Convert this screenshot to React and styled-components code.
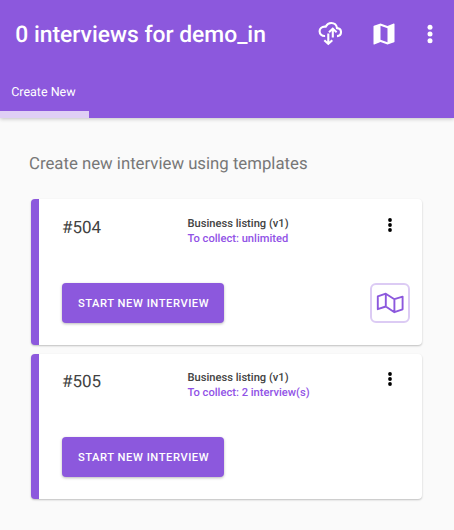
import React from "react";
import styled, { createGlobalStyle } from "styled-components";

const PURPLE = "#8c58dd";

const GlobalStyle = createGlobalStyle`
  *, *::before, *::after { box-sizing: border-box; }
  body {
    margin: 0;
    background: #fafafa;
    font-family: Roboto, sans-serif;
    text-rendering: geometricPrecision;
    -webkit-font-smoothing: antialiased;
  }
`;

const Screen = styled.div`
  display: flex;
  flex-direction: column;
  width: 454px;
  height: 530px;
  overflow: hidden;
  background: #fafafa;
`;

const Header = styled.header`
  display: flex;
  flex-direction: column;
  height: 118px;
  flex: none;
  background: ${PURPLE};
  color: #fff;
  box-shadow: 0 1px 4px rgba(0, 0, 0, 0.22);
`;

const Toolbar = styled.div`
  display: flex;
  align-items: center;
  height: 67px;
  padding-left: 15.3px;
`;

const Title = styled.h1`
  margin: 3px 0 0;
  flex: 1;
  font-size: 22.85px;
  line-height: 26px;
  font-weight: 500;
  white-space: nowrap;
`;

const Actions = styled.div`
  display: flex;
  align-items: center;
  padding-right: 11px;
`;

const IconButton = styled.button`
  display: flex;
  padding: 0;
  border: 0;
  background: none;
  color: inherit;
  margin-left: ${(p) => p.$gap || 0}px;
`;

const Tabs = styled.nav`
  display: flex;
  height: 51px;
`;

const Tab = styled.div`
  width: 88.5px;
  height: 51px;
  padding: 17px 0 0 11.2px;
  border-bottom: 7px solid #dfcff5;
  font-size: 12.5px;
  line-height: 17px;
  white-space: nowrap;
`;

const Content = styled.main`
  padding: 35px 32.5px 0 31px;
`;

const Heading = styled.h2`
  margin: 0 0 24px -2px;
  font-size: 16.75px;
  line-height: 22px;
  font-weight: 400;
  color: #777;
`;

const Card = styled.article`
  display: flex;
  flex-direction: column;
  justify-content: space-between;
  height: ${(p) => (p.$first ? 146 : 145)}px;
  margin-bottom: 9px;
  padding: ${(p) => (p.$first ? 17 : 16)}px 11.5px 22px 23px;
  border-left: 8px solid ${PURPLE};
  border-radius: 4px;
  background: #fff;
  box-shadow: 0 1px 2px rgba(0, 0, 0, 0.24);
`;

const CardTop = styled.div`
  display: grid;
  grid-template-columns: 125.5px 1fr 18px;
  padding-right: 11px;
`;

const Number = styled.div`
  font-size: 17px;
  line-height: 24px;
  color: #424242;
`;

const Details = styled.div`
  font-size: 11.15px;
  line-height: 15px;
  font-weight: 500;
  color: #424242;
`;

const Quota = styled.div`
  color: #9153e6;
`;

const CardActions = styled.div`
  display: flex;
  justify-content: space-between;
  align-items: center;
  height: 40px;
`;

const StartButton = styled.button`
  width: 162px;
  height: 40px;
  padding: 2px 0 0 1px;
  border: 0;
  border-radius: 4px;
  background: ${PURPLE};
  color: #fff;
  font: 500 11.2px/16px Roboto, sans-serif;
  letter-spacing: 0.54px;
  white-space: nowrap;
  box-shadow: 0 1px 3px rgba(0, 0, 0, 0.28);
`;

const MapButton = styled.button`
  display: flex;
  align-items: center;
  justify-content: center;
  width: 40px;
  height: 40px;
  padding: 0;
  border: 2px solid #dccbf4;
  border-radius: 6px;
  background: #fff;
  color: ${PURPLE};
`;

const SyncIcon = () => (
  <svg width="24" height="26" viewBox="0 0 24 26" fill="none" stroke="currentColor" strokeWidth="2.1">
    <path d="M7.1 15C3.7 15.2 1.6 13.1 1.6 10.3c0-2.7 2.2-4.7 5-4.7h1.2C9 3.3 10.8 2 13.2 2c3 0 5.4 2.1 5.8 5.1 2.3.2 4 1.8 4 4 0 2.3-1.6 3.9-4 4" />
    <path d="M14.8 16.6V8.3M11 11.2l3.8-3.6 3.8 3.6" />
    <path d="M10.3 12.4v9.7M6.3 19.2l4 3.6 4-3.6" />
  </svg>
);

const MapIcon = () => (
  <svg width="28" height="28" viewBox="0 0 24 24" fill="currentColor">
    <path d="M20.5 3l-.16.03L15 5.1 9 3 3.36 4.9c-.21.07-.36.25-.36.48V20.5c0 .28.22.5.5.5l.16-.03L9 18.9l6 2.1 5.64-1.9c.21-.07.36-.25.36-.48V3.5c0-.28-.22-.5-.5-.5zM15 19l-6-2.11V5l6 2.11V19z" />
  </svg>
);

const OutlineMapIcon = () => (
  <svg width="28" height="22" viewBox="0 0 28 22" fill="none" stroke="currentColor" strokeWidth="1.9" strokeLinejoin="round">
    <path d="M1.8 4.4L9.8 1.7 18.4 7.2l8.2-2.6v12.7l-8.2 2.9-8.6-5.7-8 2.7zM9.8 1.7v12.8M18.4 7.2v13" />
  </svg>
);

const Dots = ({ width, height, radius, step }) => (
  <svg width={width} height={height} viewBox={`0 0 ${width} ${height}`} fill="currentColor">
    {[-1, 0, 1].map((n) => (
      <circle key={n} cx={width / 2} cy={height / 2 + n * step} r={radius} />
    ))}
  </svg>
);

const MenuButton = styled(IconButton)`
  height: 18px;
  color: #000;
`;

const templates = [
  { id: "#504", quota: "unlimited", map: true },
  { id: "#505", quota: "2 interview(s)", map: false },
];

function TemplateCard({ id, quota, map, first }) {
  return (
    <Card $first={first}>
      <CardTop>
        <Number>{id}</Number>
        <Details>
          Business listing (v1)
          <Quota>To collect: {quota}</Quota>
        </Details>
        <MenuButton aria-label="More options">
          <Dots width={18} height={18} radius={1.9} step={5} />
        </MenuButton>
      </CardTop>
      <CardActions>
        <StartButton>START NEW INTERVIEW</StartButton>
        {map && (
          <MapButton aria-label="Show map">
            <OutlineMapIcon />
          </MapButton>
        )}
      </CardActions>
    </Card>
  );
}

export default function App() {
  return (
    <Screen>
      <GlobalStyle />
      <Header>
        <Toolbar>
          <Title>0 interviews for demo_in</Title>
          <Actions>
            <IconButton aria-label="Synchronize"><SyncIcon /></IconButton>
            <IconButton aria-label="Map" $gap={28}><MapIcon /></IconButton>
            <IconButton aria-label="Menu" $gap={19.5}>
              <Dots width={26} height={24} radius={2.5} step={6.7} />
            </IconButton>
          </Actions>
        </Toolbar>
        <Tabs>
          <Tab>Create New</Tab>
        </Tabs>
      </Header>
      <Content>
        <Heading>Create new interview using templates</Heading>
        {templates.map((t, i) => <TemplateCard key={t.id} first={i === 0} {...t} />)}
      </Content>
    </Screen>
  );
}
